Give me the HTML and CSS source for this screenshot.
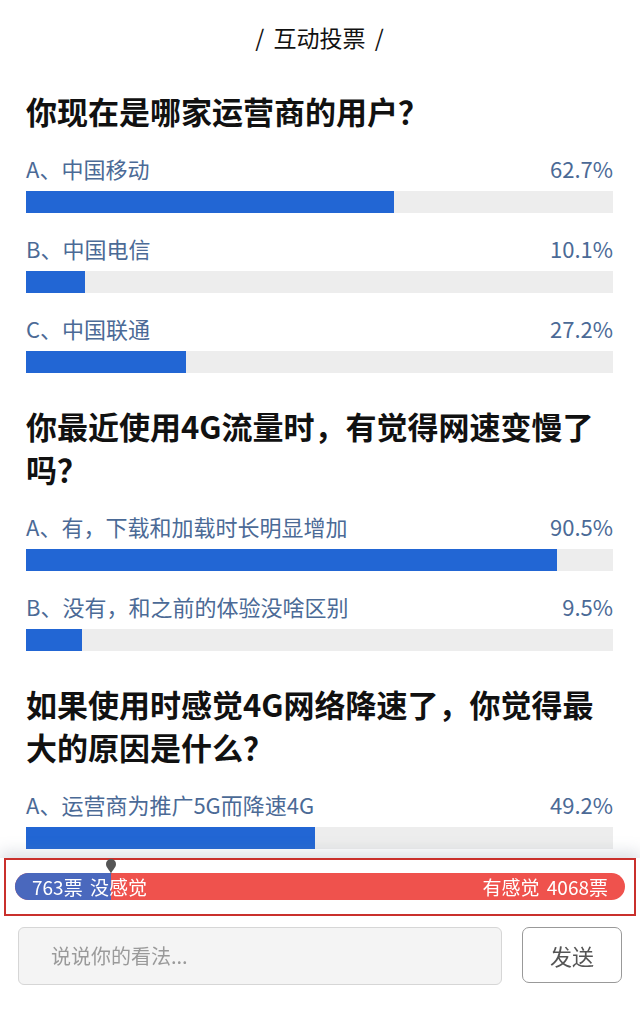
FILE: index.html
```html
<!DOCTYPE html>
<html lang="zh">
<head>
    <meta charset="UTF-8">
    <meta name="viewport" content="width=device-width, initial-scale=1.0">
    <title>互动投票</title>
    <link rel="stylesheet" href="styles.css">
</head>
<body>
    <div class="title">/ 互动投票 /</div>

    <div class="question">
        <h2>你现在是哪家运营商的用户？</h2>
        <div class="option">
            <div class="option-head"><span>A、中国移动</span><span>62.7%</span></div>
            <div class="bar"><div class="fill" style="width: 62.7%"></div></div>
        </div>
        <div class="option">
            <div class="option-head"><span>B、中国电信</span><span>10.1%</span></div>
            <div class="bar"><div class="fill" style="width: 10.1%"></div></div>
        </div>
        <div class="option">
            <div class="option-head"><span>C、中国联通</span><span>27.2%</span></div>
            <div class="bar"><div class="fill" style="width: 27.2%"></div></div>
        </div>
    </div>

    <div class="question">
        <h2>你最近使用4G流量时，有觉得网速变慢了吗？</h2>
        <div class="option">
            <div class="option-head"><span>A、有，下载和加载时长明显增加</span><span>90.5%</span></div>
            <div class="bar"><div class="fill" style="width: 90.5%"></div></div>
        </div>
        <div class="option">
            <div class="option-head"><span>B、没有，和之前的体验没啥区别</span><span>9.5%</span></div>
            <div class="bar"><div class="fill" style="width: 9.5%"></div></div>
        </div>
    </div>

    <div class="question">
        <h2>如果使用时感觉4G网络降速了，你觉得最大的原因是什么？</h2>
        <div class="option">
            <div class="option-head"><span>A、运营商为推广5G而降速4G</span><span>49.2%</span></div>
            <div class="bar"><div class="fill" style="width: 49.2%"></div></div>
        </div>
    </div>

    <div class="footer">
        <div class="highlight">
            <div class="vote-bar">
                <div class="vote-no" style="width: 15.8%"></div>
                <svg class="pin" style="left: 15.8%" width="12" height="16" viewBox="0 0 12 16">
                    <path d="M6 16 C5 12 1 10 1 6 A5 5 0 0 1 11 6 C11 10 7 12 6 16 Z" fill="#555"/>
                </svg>
                <span class="vote-text">763票 没感觉</span>
                <span class="vote-text">有感觉 4068票</span>
            </div>
        </div>
        <div class="comment">
            <div class="comment-input">说说你的看法...</div>
            <div class="send">发送</div>
        </div>
    </div>
</body>
</html>
```

FILE: styles.css
```css
/* Grundlayout */
body {
    margin: 0;
    padding: 0 27px 0 26px;
    font-family: "Noto Sans CJK SC", "Noto Sans", sans-serif;
    background: #fff;
    color: #111;
}
.title {
    text-align: center;
    font-size: 23px;
    line-height: 30px;
    padding: 22px 0 6px;
    word-spacing: 4px;
    color: #111;
}
.question {
    margin-top: 31px;
}
h2 {
    margin: 0 0 22px;
    font-size: 31px;
    line-height: 43px;
    font-weight: bold;
}
.option {
    margin-bottom: 21px;
}
.option:last-child {
    margin-bottom: 0;
}
.option-head {
    display: flex;
    justify-content: space-between;
    font-size: 22px;
    line-height: 28px;
    color: #4b6a96;
}
.bar {
    margin-top: 9px;
    height: 22px;
    background: #ededed;
}
.fill {
    height: 100%;
    background: #2266d4;
}

/* Fußbereich */
.footer {
    position: fixed;
    left: 0;
    right: 0;
    bottom: 0;
    height: 163px;
    background: #fff;
    box-shadow: 0 -6px 14px rgba(120, 130, 150, 0.25);
}
.highlight {
    margin: 0 4px;
    border: 2px solid #c9302c;
    padding: 13px 9px 0;
    height: 41px;
}
.vote-bar {
    position: relative;
    display: flex;
    justify-content: space-between;
    align-items: center;
    height: 27px;
    padding: 0 17px;
    border-radius: 14px;
    background: #ef524d;
    color: #fff;
    font-size: 19px;
    word-spacing: 3px;
}
.vote-no {
    position: absolute;
    left: 0;
    top: 0;
    bottom: 0;
    background: #4a68bd;
    border-radius: 14px 0 0 14px;
}
.vote-text {
    position: relative;
}
.pin {
    position: absolute;
    top: -15px;
    margin-left: -6px;
}
.comment {
    display: flex;
    gap: 20px;
    padding: 11px 18px 0;
}
.comment-input {
    flex: 1;
    height: 56px;
    line-height: 56px;
    padding-left: 32px;
    border: 1px solid #d6d6d6;
    border-radius: 6px;
    background: #f4f4f4;
    color: #9a9a9a;
    font-size: 20px;
}
.send {
    width: 98px;
    height: 54px;
    line-height: 54px;
    text-align: center;
    border: 1px solid #999;
    border-radius: 7px;
    color: #555;
    font-size: 22px;
}
```
